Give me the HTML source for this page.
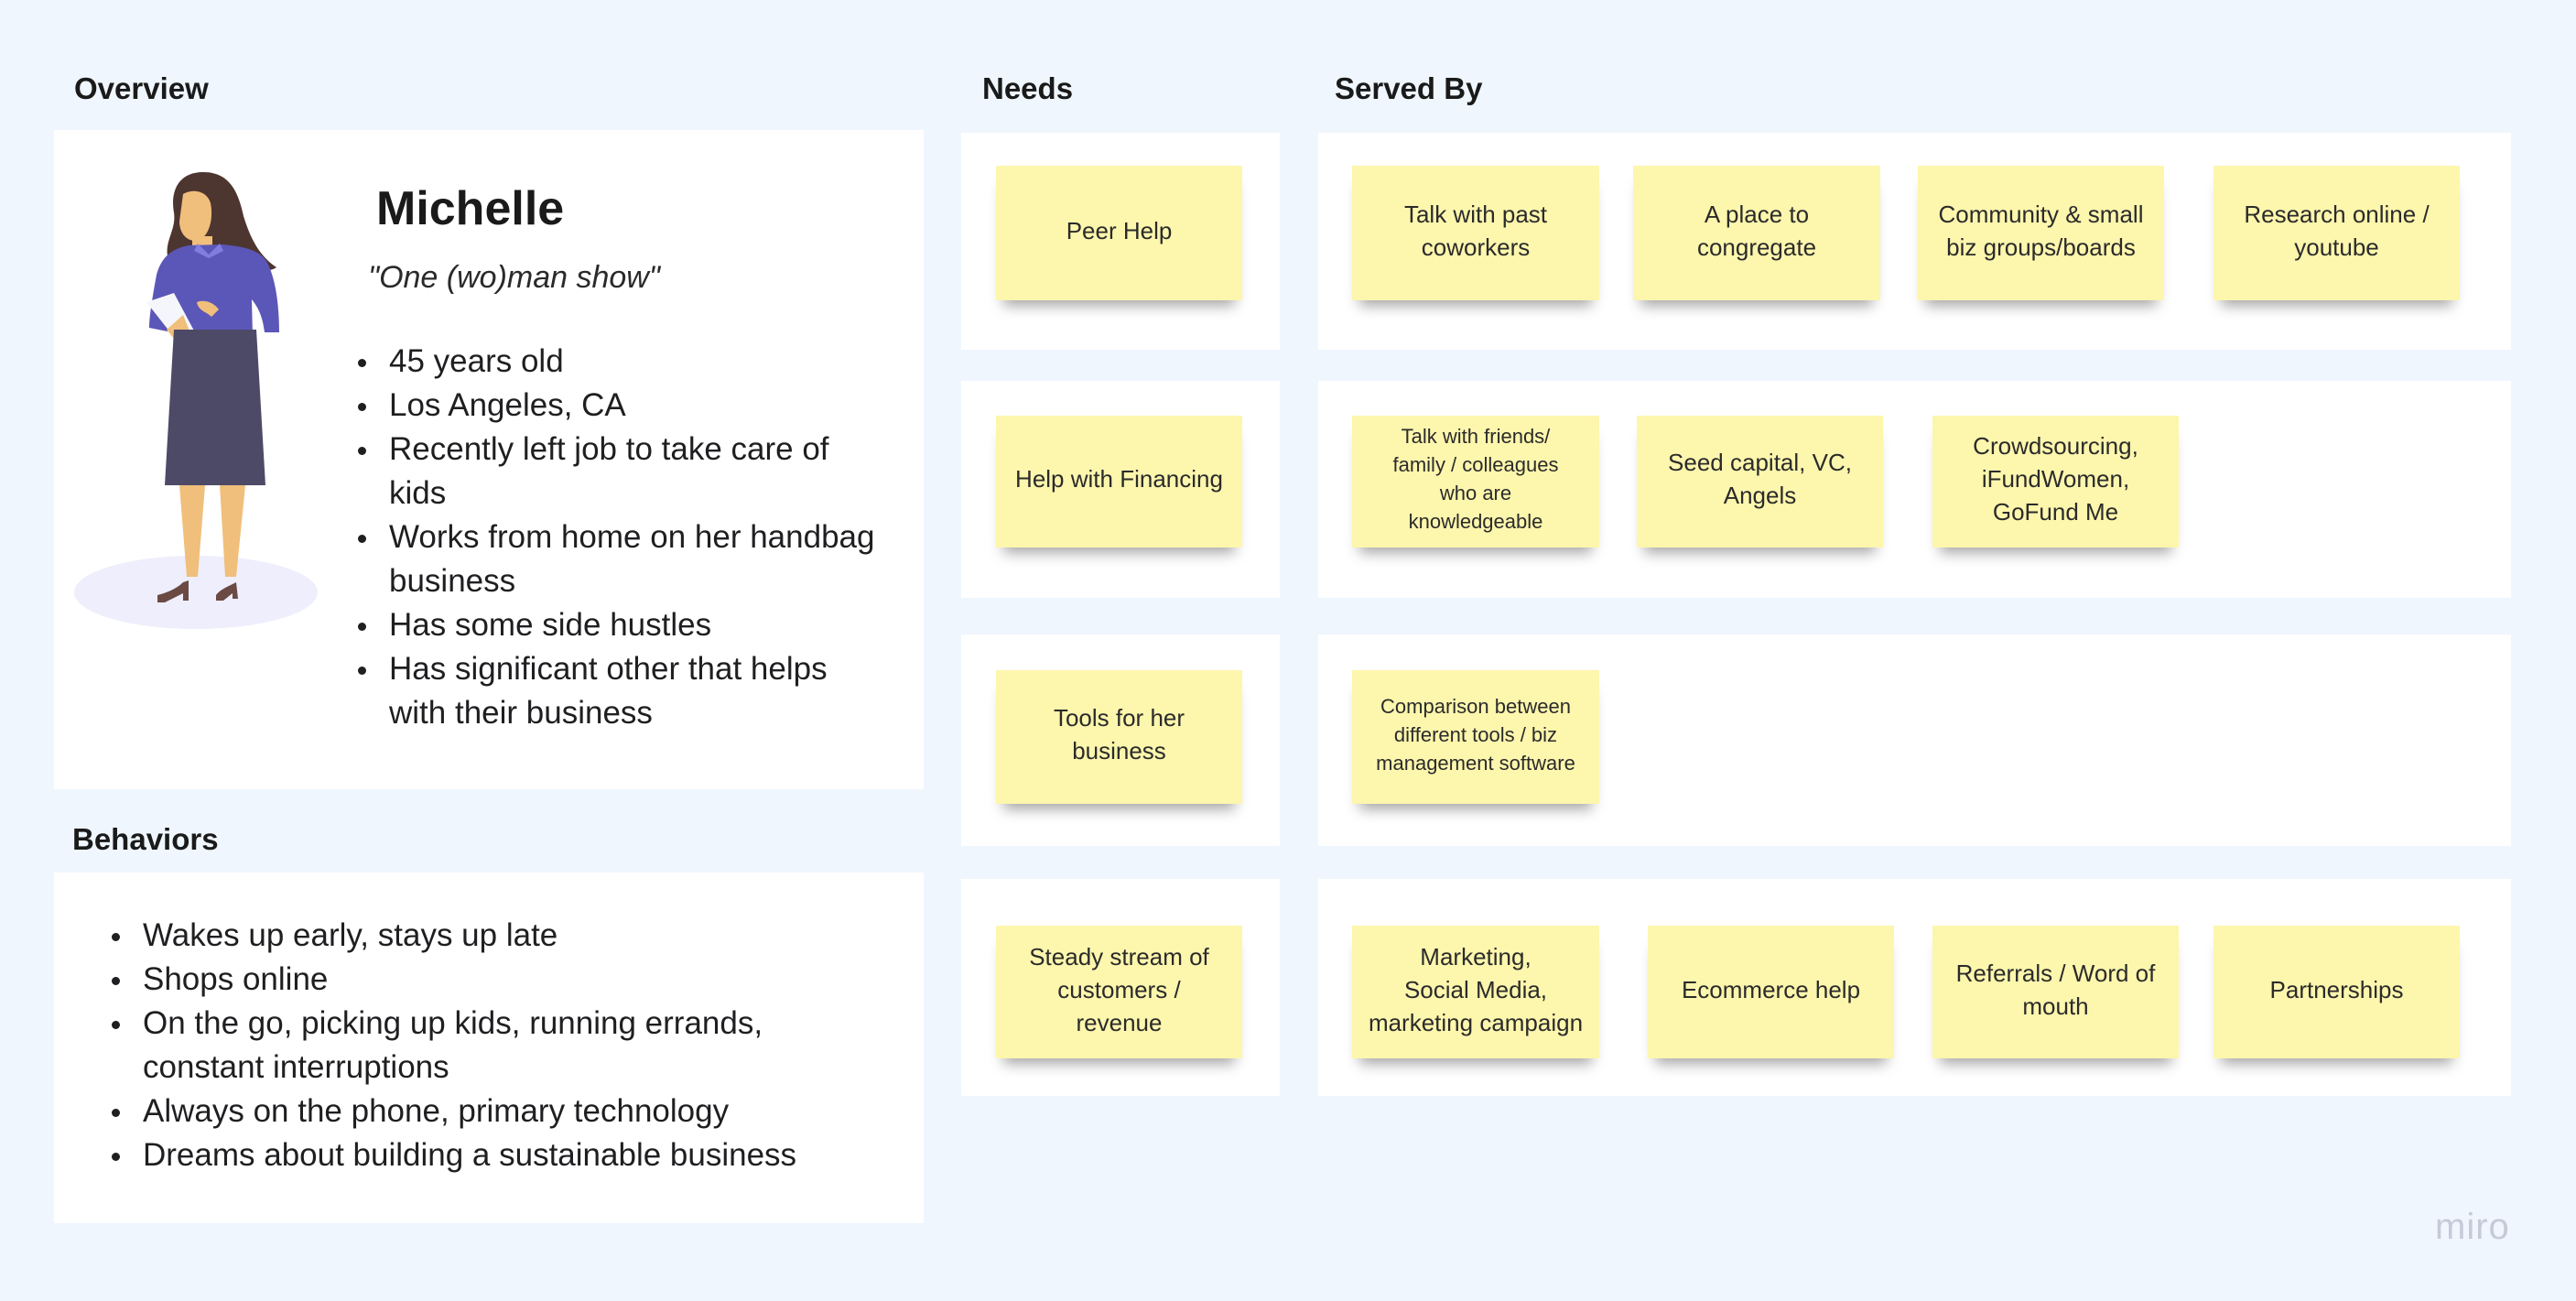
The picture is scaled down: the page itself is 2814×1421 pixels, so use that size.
<!DOCTYPE html>
<html><head><meta charset="utf-8"><style>
*{margin:0;padding:0;box-sizing:border-box}
body{width:2814px;height:1421px;background:#eff6fe;position:relative;overflow:hidden;font-family:"Liberation Sans",sans-serif;color:#1f1f22}
.h{position:absolute;font-weight:bold;font-size:33px;color:#1a1a1a}
.card{position:absolute;background:#fff}
.s{position:absolute;background:#fdf6ad;display:flex;align-items:center;justify-content:center;text-align:center;font-size:26px;line-height:36px;color:#2b2b2b;padding:0 22px 6px;box-shadow:0 14px 14px -8px rgba(0,0,0,.35)}
.s.sm{font-size:22px;line-height:31px;padding:0 16px 6px}
ul{position:absolute;list-style:none;font-size:35px;line-height:48px;color:#1f1f22}
ul li{position:relative;padding-left:0}
ul li:before{content:"";position:absolute;left:-34px;top:21px;width:9px;height:9px;border-radius:50%;background:#1f1f22}
</style></head><body>
<div class="h" style="left:81px;top:78px">Overview</div>
<div class="h" style="left:1073px;top:78px">Needs</div>
<div class="h" style="left:1458px;top:78px">Served By</div>
<div class="h" style="left:79px;top:898px">Behaviors</div>

<div class="card" style="left:59px;top:142px;width:950px;height:720px"></div>
<div class="card" style="left:59px;top:953px;width:950px;height:383px"></div>

<svg style="position:absolute;left:0;top:0" width="1010" height="870">
<ellipse cx="214" cy="647" rx="133" ry="40" fill="#eeeefc"/>
<path d="M222 188c-28 0-36 22-32 44 3 20-12 32-6 52 8 14 22 10 36 6l20-10c24 6 48 22 62 12-18-12-28-30-36-56-6-28-16-48-44-48z" fill="#4d3530"/>
<path d="M200 212c10-6 26-4 30 10 3 14 0 34-12 40-12 4-22-6-22-20z" fill="#f0bf7b"/>
<path d="M210 258h22v18h-22z" fill="#f0bf7b"/>
<path d="M206 268c-20 4-30 14-35 32-4 22-8 45-8 58l20 4c2-10 5-20 10-30l4 75h80l-2-80c8 10 12 20 14 36h16c0-30-4-60-14-78-10-14-30-16-48-18z" fill="#5b57b8"/>
<path d="M216 266l12 12 12-12 4 8-16 8-16-8z" fill="#7f7ee0"/>
<path d="M160 330l30-10 32 60-18 6z" fill="#f5f6fb"/>
<path d="M182 360l18-16 8 20-18 6zM215 330c10-4 20 2 24 8l-8 8c-6-6-14-6-16-16z" fill="#f0bf7b"/>
<path d="M190 360h90l10 170-110 0z" fill="#4c4a66"/>
<path d="M196 530h28l-8 100h-12zM240 530h28l-10 100h-12z" fill="#f0bf7b"/>
<path d="M172 650c8-2 20-6 28-14l6-2v22h-6v-8l-20 10h-8zM236 650c4-6 14-10 22-14l2 18h-6v-6l-10 8h-8z" fill="#6b4a44"/>
</svg>

<div style="position:absolute;left:411px;top:198px;font-size:52px;font-weight:bold;color:#1a1a1a">Michelle</div>
<div style="position:absolute;left:402px;top:284px;font-size:34px;font-style:italic;color:#2a2a2a">"One (wo)man show"</div>
<ul style="left:425px;top:371px;width:540px">
<li>45 years old</li><li>Los Angeles, CA</li><li>Recently left job to take care of kids</li><li>Works from home on her handbag business</li><li>Has some side hustles</li><li>Has significant other that helps with their business</li>
</ul>
<ul style="left:156px;top:998px;width:725px">
<li>Wakes up early, stays up late</li><li>Shops online</li><li>On the go, picking up kids, running errands, constant interruptions</li><li>Always on the phone, primary technology</li><li>Dreams about building a sustainable business</li>
</ul>

<div class="card" style="left:1050px;top:145px;width:348px;height:237px"></div>
<div class="card" style="left:1050px;top:416px;width:348px;height:237px"></div>
<div class="card" style="left:1050px;top:693px;width:348px;height:231px"></div>
<div class="card" style="left:1050px;top:960px;width:348px;height:237px"></div>
<div class="card" style="left:1440px;top:145px;width:1303px;height:237px"></div>
<div class="card" style="left:1440px;top:416px;width:1303px;height:237px"></div>
<div class="card" style="left:1440px;top:693px;width:1303px;height:231px"></div>
<div class="card" style="left:1440px;top:960px;width:1303px;height:237px"></div>

<div class="s" style="left:1088px;top:181px;width:269px;height:147px">Peer Help</div>
<div class="s" style="left:1088px;top:454px;width:269px;height:144px;padding:0 6px 6px">Help with Financing</div>
<div class="s" style="left:1088px;top:732px;width:269px;height:146px">Tools for her business</div>
<div class="s" style="left:1088px;top:1011px;width:269px;height:145px">Steady stream of<br>customers /<br>revenue</div>

<div class="s" style="left:1477px;top:181px;width:270px;height:147px">Talk with past coworkers</div>
<div class="s" style="left:1784px;top:181px;width:270px;height:147px">A place to congregate</div>
<div class="s" style="left:2095px;top:181px;width:269px;height:147px;padding:0 8px 6px">Community &amp; small biz groups/boards</div>
<div class="s" style="left:2418px;top:181px;width:269px;height:147px">Research online / youtube</div>

<div class="s sm" style="left:1477px;top:454px;width:270px;height:144px">Talk with friends/<br>family / colleagues<br>who are<br>knowledgeable</div>
<div class="s" style="left:1788px;top:454px;width:269px;height:144px">Seed capital, VC, Angels</div>
<div class="s" style="left:2111px;top:454px;width:269px;height:144px">Crowdsourcing, iFundWomen, GoFund Me</div>

<div class="s sm" style="left:1477px;top:732px;width:270px;height:146px">Comparison between different tools / biz management software</div>

<div class="s" style="left:1477px;top:1011px;width:270px;height:145px;padding:0 4px 6px">Marketing,<br>Social Media,<br>marketing campaign</div>
<div class="s" style="left:1800px;top:1011px;width:269px;height:145px">Ecommerce help</div>
<div class="s" style="left:2111px;top:1011px;width:269px;height:145px">Referrals / Word of mouth</div>
<div class="s" style="left:2418px;top:1011px;width:269px;height:145px">Partnerships</div>

<div style="position:absolute;left:2660px;top:1318px;font-size:40px;color:#c6cad8;letter-spacing:1px">miro</div>
</body></html>
